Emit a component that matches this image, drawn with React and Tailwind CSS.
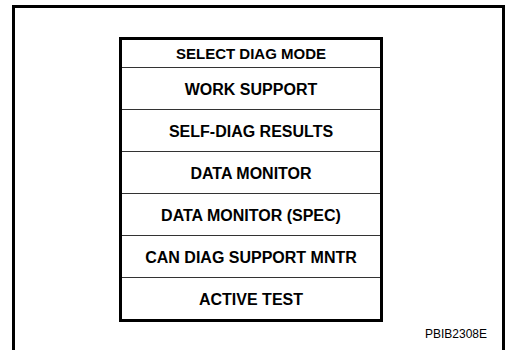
const rows = [
  'WORK SUPPORT',
  'SELF-DIAG RESULTS',
  'DATA MONITOR',
  'DATA MONITOR (SPEC)',
  'CAN DIAG SUPPORT MNTR',
  'ACTIVE TEST',
];

export default function App() {
  return (
    <div className="w-[505px] h-[350px] bg-white overflow-hidden font-['Liberation_Sans',Arial,sans-serif] text-black">
      <div className="ml-[12px] mt-[5px] h-[360px] border-l-[3px] border-t-[3px] border-r-[3px] border-black pt-[29px]">
        <div className="ml-[104px] w-[264px] border-[3px] border-black">
          <div className="h-[28px] border-b border-[#333] flex items-center justify-center text-[15px] font-bold leading-none">
            SELECT DIAG MODE
          </div>
          {rows.map((r, i) => (
            <div
              key={r}
              className={
                i < rows.length - 1
                  ? 'h-[42px] pt-[3px] border-b border-[#333] flex items-center justify-center text-[16px] font-bold leading-none'
                  : 'h-[41px] pt-[3px] flex items-center justify-center text-[16px] font-bold leading-none'
              }
            >
              {r}
            </div>
          ))}
        </div>
        <div className="mt-[5px] pr-[15px] text-right text-[12px] leading-[14px]">PBIB2308E</div>
      </div>
    </div>
  );
}
